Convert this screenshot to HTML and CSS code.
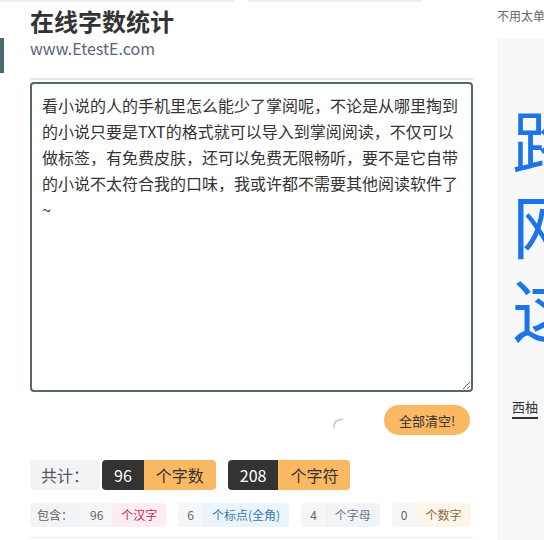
FILE: index.html
```html
<!DOCTYPE html>
<html lang="zh-CN">
<head>
  <meta charset="UTF-8">
  <meta name="viewport" content="width=device-width, initial-scale=1.0">
  <title>在线字数统计</title>
  <link rel="stylesheet" href="styles.css">
</head>
<body>
  <div class="topline">
    <span class="seg seg-a"></span>
    <span class="seg seg-b"></span>
  </div>
  <div class="page">
    <div class="gutter"><span class="mark"></span></div>

    <div class="main">
      <div class="header">
        <h1>在线字数统计</h1>
        <div class="site">www.EtestE.com</div>
      </div>

      <textarea id="content" class="editor">看小说的人的手机里怎么能少了掌阅呢，不论是从哪里掏到的小说只要是TXT的格式就可以导入到掌阅阅读，不仅可以做标签，有免费皮肤，还可以免费无限畅听，要不是它自带的小说不太符合我的口味，我或许都不需要其他阅读软件了~</textarea>

      <div class="actions">
        <svg class="spinner" width="16" height="16" viewBox="0 0 16 16">
          <path d="M1 9 A7 7 0 0 1 9 1.5" fill="none" stroke="#cfcfcf" stroke-width="2" stroke-linecap="round"/>
        </svg>
        <button type="button" class="clear-btn">全部清空!</button>
      </div>

      <div class="total">
        <span class="total-label">共计：</span>
        <span class="pair">
          <span class="num-dark">96</span><span class="unit-orange">个字数</span>
        </span>
        <span class="pair">
          <span class="num-dark">208</span><span class="unit-orange">个字符</span>
        </span>
      </div>

      <div class="detail">
        <span class="pair small">
          <span class="detail-label">包含：</span><span class="num-light">96</span><span class="unit u-han">个汉字</span>
        </span>
        <span class="pair small">
          <span class="num-light">6</span><span class="unit u-punct">个标点(全角)</span>
        </span>
        <span class="pair small">
          <span class="num-light">4</span><span class="unit u-letter">个字母</span>
        </span>
        <span class="pair small">
          <span class="num-light">0</span><span class="unit u-digit">个数字</span>
        </span>
      </div>

      <div class="bottomline"></div>
    </div>

    <div class="side">
      <div class="side-note">不用太单调的日常推荐</div>
      <div class="side-panel">
        <div class="big-text">路<br>网<br>这</div>
        <span class="side-tab">西柚</span>
      </div>
    </div>
  </div>
</body>
</html>
```

FILE: styles.css
```css
html, body {
  margin: 0;
  padding: 0;
  overflow: hidden;
  background-color: #fff;
}

body {
  font-family: "Noto Sans CJK SC", "Noto Sans", sans-serif;
  color: #333;
}

.topline {
  display: flex;
  height: 2px;
}

.seg {
  display: block;
  height: 2px;
  background-color: #eeeeee;
}

.seg-a {
  width: 235px;
}

.seg-b {
  width: 174px;
  margin-left: 13px;
}

.page {
  display: flex;
  width: 544px;
  overflow: hidden;
}

.gutter {
  flex: 0 0 30px;
}

.mark {
  display: block;
  width: 4px;
  height: 35px;
  margin-top: 36px;
  background-color: #4b6a6f;
}

.main {
  flex: 0 0 443px;
}

.header {
  padding: 4px 0 20px;
  border-bottom: 2px solid #e6e6e6;
}

h1 {
  margin: 0;
  font-size: 24px;
  line-height: 30px;
  font-weight: bold;
  color: #333;
}

.site {
  margin-top: 2px;
  font-size: 16px;
  line-height: 20px;
  color: #5b6478;
}

.editor {
  display: block;
  width: 100%;
  height: 310px;
  margin-top: 2px;
  padding: 8px 10px;
  box-sizing: border-box;
  border: 2px solid #57686d;
  border-radius: 4px;
  font-family: "Noto Sans CJK SC", sans-serif;
  font-size: 16px;
  line-height: 26px;
  color: #333;
  outline: none;
}

.actions {
  display: flex;
  justify-content: flex-end;
  align-items: center;
  height: 30px;
  margin-top: 13px;
  padding-right: 3px;
}

.spinner {
  align-self: flex-end;
  margin-bottom: 1px;
  margin-right: 35px;
}

.clear-btn {
  width: 86px;
  height: 30px;
  padding: 0;
  border: none;
  border-radius: 15px;
  background-color: #fbb863;
  font-family: "Noto Sans CJK SC", sans-serif;
  font-size: 13px;
  color: #333;
  cursor: pointer;
}

.total {
  display: flex;
  align-items: center;
  gap: 12px;
  margin-top: 25px;
  height: 30px;
}

.total-label {
  height: 30px;
  line-height: 30px;
  padding: 0 11px;
  margin-right: -10px;
  background-color: #f2f3f5;
  border-radius: 4px;
  font-size: 16px;
  color: #555;
}

.pair {
  display: flex;
  border-radius: 4px;
  overflow: hidden;
}

.num-dark,
.unit-orange {
  height: 30px;
  line-height: 30px;
  padding: 0 12px;
  font-size: 16px;
}

.num-dark {
  background-color: #333;
  color: #fff;
}

.unit-orange {
  background-color: #fbb863;
  color: #333;
}

.detail {
  display: flex;
  gap: 12px;
  margin-top: 13px;
}

.small span {
  height: 24px;
  line-height: 24px;
  padding: 0 9px;
  font-size: 12px;
}

.small .detail-label {
  padding: 0 8px 0 7px;
  background-color: #f2f3f5;
  color: #606266;
}

.num-light {
  background-color: #f5f6f8;
  color: #666;
}

.u-han {
  background-color: #fdecf1;
  color: #c62a50;
}

.u-punct {
  background-color: #eaf4fb;
  color: #3479b5;
}

.u-letter {
  background-color: #f1f3f6;
  color: #6b7785;
}

.u-digit {
  background-color: #fdf5e9;
  color: #8b6a3c;
}

.bottomline {
  margin-top: 10px;
  border-top: 1px solid #eeeeee;
}

.side {
  flex: 0 0 300px;
  margin-left: 24px;
}

.side-note {
  padding-top: 5px;
  font-size: 12px;
  line-height: 18px;
  color: #666;
  white-space: nowrap;
}

.side-panel {
  height: 520px;
  margin-top: 13px;
  padding: 60px 0 0 15px;
  background-color: #f7f8fa;
}

.big-text {
  font-size: 70px;
  line-height: 84px;
  color: #1d74e6;
}

.side-tab {
  display: inline-block;
  margin-top: 48px;
  padding-bottom: 1px;
  border-bottom: 2px solid #333;
  font-size: 13px;
  line-height: 18px;
  color: #333;
}
```
